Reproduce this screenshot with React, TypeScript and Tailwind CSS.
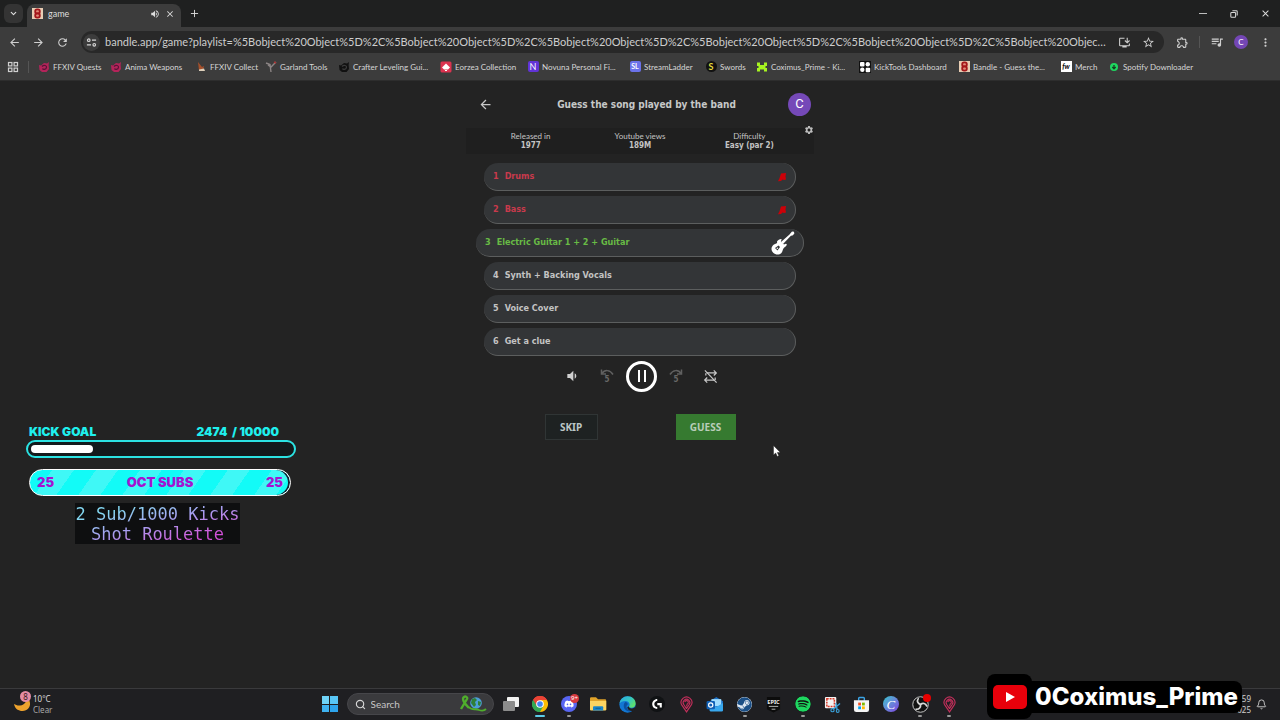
import type { ReactNode } from "react";
import {
  MdArrowBack,
  MdArrowForward,
  MdClose,
  MdInstallDesktop,
  MdMoreVert,
  MdOutlineExtension,
  MdQueueMusic,
  MdRefresh,
  MdSettings,
  MdStarBorder,
  MdVolumeDown,
  MdVolumeUp,
} from "react-icons/md";
import { FaDiscord, FaSpotify, FaSteam } from "react-icons/fa";
import { SiLogitechg } from "react-icons/si";
import { Bell, ChevronDown, Plus, Search } from "lucide-react";

const url = "bandle.app/game?playlist=" + "%5Bobject%20Object%5D%2C".repeat(9);

/* ---------- small drawings ---------- */

function BandleIcon({ className }: { className: string }) {
  return (
    <svg viewBox="0 0 12 12" className={className}>
      <rect width="12" height="12" fill="#e8cdb4" />
      <rect x="3.500" y="1.500" width="5" height="4.500" rx="2" fill="#e08a78" stroke="#a3161a" strokeWidth="2" />
      <rect x="3.500" y="6" width="5" height="4.500" rx="2" fill="#e08a78" stroke="#a3161a" strokeWidth="2" />
    </svg>
  );
}

function TuneIcon() {
  return (
    <svg viewBox="0 0 12 12" className="size-[11px]" fill="none" stroke="#d6d6d6" strokeWidth="1.3">
      <path d="M6.5 3.5H11M1 8.5h4.5" />
      <circle cx="3" cy="3.5" r="1.4" />
      <circle cx="9" cy="8.5" r="1.4" />
    </svg>
  );
}

function GridIcon() {
  return (
    <svg viewBox="0 0 12 12" className="size-3" fill="none" stroke="#d0d0d0" strokeWidth="1.2">
      <rect x="1.5" y="1.5" width="3.4" height="3.4" />
      <rect x="7.1" y="1.5" width="3.4" height="3.4" />
      <rect x="1.5" y="7.1" width="3.4" height="3.4" />
      <rect x="7.1" y="7.1" width="3.4" height="3.4" />
    </svg>
  );
}

function SwirlIcon({ color, dark }: { color: string; dark: string }) {
  return (
    <svg viewBox="0 0 12 12" className="size-3">
      <path d="M1 4l2 .6L6 2l3 .5L11 1l-.4 3 .4 4-2.500 3H4L1.500 9z" fill={color} />
      <path d="M4 5.500c2-2 5-1 4.500 1S5 9 4.500 7.500" fill="none" stroke={dark} strokeWidth="1.2" />
    </svg>
  );
}

function ChromeIcon() {
  return (
    <svg viewBox="0 0 48 48" className="size-4">
      <path d="M24 24L3.200 12A24 24 0 0 1 44.800 12z" fill="#ea4335" />
      <path d="M24 24L44.800 12A24 24 0 0 1 24 48z" fill="#fbbc05" />
      <path d="M24 24L24 48A24 24 0 0 1 3.200 12z" fill="#34a853" />
      <path d="M24 12h20.800L34 30z" fill="#fbbc05" />
      <path d="M24 12h20.800A24 24 0 0 0 3.200 12L14 30z" fill="#ea4335" />
      <path d="M34 30L24 48A24 24 0 0 1 3.200 12L14 30z" fill="#34a853" />
      <circle cx="24" cy="24" r="11.500" fill="#fff" />
      <circle cx="24" cy="24" r="8.500" fill="#4285f4" />
    </svg>
  );
}

function FolderIcon() {
  return (
    <svg viewBox="0 0 18 16" className="h-4 w-[18px]">
      <path d="M1 2.500A1.200 1.200 0 0 1 2.200 1.300H7l2 2h7a1.200 1.200 0 0 1 1.200 1.200V14H1z" fill="#e0a32a" />
      <path d="M1 5h16.200v8.500a1 1 0 0 1-1 1H2a1 1 0 0 1-1-1z" fill="#fcd462" />
      <path d="M4 14.500v-3.300a1 1 0 0 1 1-1h8.200a1 1 0 0 1 1 1v3.300z" fill="#1b86c9" />
      <path d="M6.500 12.300h5.200" stroke="#0d5f97" strokeWidth="1" />
    </svg>
  );
}

function EdgeIcon() {
  return (
    <svg viewBox="0 0 24 24" className="size-[17px]">
      <defs>
        <linearGradient id="edgeTop" x1="0" y1="0" x2="1" y2=".6">
          <stop offset="0" stopColor="#2aa7e0" />
          <stop offset=".6" stopColor="#35c6c0" />
          <stop offset="1" stopColor="#5fe06a" />
        </linearGradient>
      </defs>
      <circle cx="12" cy="12" r="11.500" fill="#1277d3" />
      <path d="M.6 11C1.500 4.500 6.500.5 12 .5c7 0 11.500 5 11.500 10 0 4-3 6-6 6-2.500 0-3.800-1-3.300-2 .8-1 .8-1.500.8-2.500 0-2.500-2.600-5-6-5C5 7 1.500 8.500.6 11z" fill="url(#edgeTop)" />
      <path d="M9 8.500c-3 2-3 8 0 11s7 3 10 1c-3 1-7-.5-8-3.500-1-2.500-.2-4.500 1.500-5.500-.5-2-2-3-3.500-3z" fill="#0b4f9e" />
      <path d="M14.200 14.500c-.8 1.500 1 3 4 3 2 0 3.500-.8 4.300-1.800l.7 2-3 3.300c-4 .8-8.500-1-8.500-5z" fill="#1f1f22" />
    </svg>
  );
}

function MapPinIcon() {
  return (
    <svg viewBox="0 0 14 18" className="h-[17px] w-[13px]" fill="none" stroke="#c22f5b" strokeWidth="1.2">
      <path d="M7 17L2.200 10A5.800 5.800 0 1 1 11.800 10z" />
      <path d="M7 13.500L4 9a3.600 3.600 0 1 1 6 0L7 13.500M5.200 6.500a1.900 1.900 0 1 1 2.600 2L7 11" />
    </svg>
  );
}

function OutlookIcon() {
  return (
    <svg viewBox="0 0 20 18" className="h-4 w-[18px]">
      <path d="M4 6l7.500-5L19 6v10.500H4z" fill="#1a6fc4" />
      <path d="M6 3.500h11v8H6z" fill="#9fdcff" />
      <path d="M4 8l7.500 4.500L19 8v8a1.500 1.500 0 0 1-1.500 1.500H5.500A1.500 1.500 0 0 1 4 16z" fill="#38a8ee" />
      <rect x="0.500" y="5.500" width="9.500" height="9.500" rx="1.500" fill="#0f5fb5" />
      <circle cx="5.200" cy="10.200" r="2.400" fill="none" stroke="#fff" strokeWidth="1.300" />
    </svg>
  );
}

function SnipIcon() {
  return (
    <svg viewBox="0 0 18 18" className="size-[17px]">
      <rect x="1" y="1" width="12" height="12" rx="1" fill="#f3f3f3" />
      <rect x="3" y="3" width="8" height="8" fill="none" stroke="#d83b2b" strokeWidth="1.600" strokeDasharray="2 1" />
      <path d="M17 8l-7.500 6M12.500 7.500L14 15" stroke="#3aa0d8" strokeWidth="1.500" />
      <circle cx="9" cy="15" r="1.700" fill="none" stroke="#3aa0d8" strokeWidth="1.200" />
      <circle cx="14.500" cy="15.800" r="1.500" fill="none" stroke="#3aa0d8" strokeWidth="1.200" />
    </svg>
  );
}

function StoreIcon() {
  return (
    <svg viewBox="0 0 18 18" className="size-[17px]">
      <path d="M6 5V2.500A1 1 0 0 1 7 1.500h4a1 1 0 0 1 1 1V5" fill="none" stroke="#3ba4e6" strokeWidth="1.500" />
      <path d="M1 4.500h16v10a2.500 2.500 0 0 1-2.500 2.500h-11A2.500 2.500 0 0 1 1 14.500z" fill="#f5f5f5" />
      <path d="M5.500 7h3v3h-3z" fill="#f25022" />
      <path d="M9.500 7h3v3h-3z" fill="#7fba00" />
      <path d="M5.500 11h3v3h-3z" fill="#00a4ef" />
      <path d="M9.500 11h3v3h-3z" fill="#ffb900" />
    </svg>
  );
}

function ObsIcon() {
  return (
    <svg viewBox="0 0 18 18" className="size-[17px]">
      <circle cx="9" cy="9" r="8.200" fill="#111" stroke="#cfcfcf" strokeWidth="1" />
      <g fill="none" stroke="#d8d8d8" strokeWidth="1.800" strokeLinecap="round">
        <path d="M9 9c-3-1-4-3.500-2.500-6" />
        <path d="M9 9c2.500-2 5.500-1.200 6.500 1.500" />
        <path d="M9 9c.5 3-1.500 5.300-4.500 5" />
      </g>
    </svg>
  );
}

function WeatherIcon() {
  return (
    <svg viewBox="0 0 18 18" className="size-[18px]">
      <path d="M13 1c1.500 5-1 9-6 9.500-2.500.2-4.500-.6-6-1.500 1 5 4.500 7 8.500 7 5 0 8-4 7.500-8C16.500 4.500 15 2 13 1z" fill="#eda22d" />
    </svg>
  );
}

function RibbonGlobe() {
  return (
    <svg viewBox="0 0 28 18" className="h-[18px] w-7">
      <path d="M2 14L8 4c1-2-2-3.500-3.500-1.500S6 9 10 13" fill="none" stroke="#4fae2c" strokeWidth="2.400" />
      <circle cx="17" cy="8" r="5.800" fill="#4d9fd6" />
      <path d="M13 4l3-1 2 2-2 2 1 3-2 2-3-4zM19 6l3 1-1 4-2-1z" fill="#2f7f35" />
      <path d="M10 12c3 4 7 1 10 3 3 1 5 1 7-1" fill="none" stroke="#4fae2c" strokeWidth="1.800" />
    </svg>
  );
}

function GuitarIcon() {
  return (
    <svg viewBox="0 0 26 26" className="h-[26px] w-[26px]" fill="#fff">
      <path d="M21.500 3.200L23 1.500l2 .2.300 2-1.800 1.800-1.600.2L14 14l-2-2 8.500-7.500z" />
      <path d="M8 11.500c1-1.500 3-2.700 4.200-2.500.8.300.3 1.200-.4 2.200l3.200 3.200c1.500-.7 2.700-.8 2.800.1 0 1.500-2 2.500-3.200 3.700-1.200 1.400-.8 3.300-2.400 5-1.900 1.900-5.800 1.800-8-.4s-2.300-5.500-.4-7.400c1.500-1.500 3.200-1.300 4.300-2.300z" />
      <path d="M6 18l3.500-2.500 1.500 1.500-2.500 3.500z" fill="#333537" />
      <circle cx="8.300" cy="18.300" r=".8" />
    </svg>
  );
}

function SkipArrow({ flip }: { flip?: boolean }) {
  return (
    <svg viewBox="0 0 16 16" className="size-4" fill="none" stroke="#606060" strokeWidth="1.500">
      <g transform={flip ? "matrix(-1 0 0 1 16 0)" : undefined}>
        <path d="M3 5.500c2.500-4 8-4 11 1" />
        <path d="M2.500 1.500v4.500h4.500" />
      </g>
      <text x="8" y="14" textAnchor="middle" fontSize="8" fontWeight="700" fill="#686868" stroke="none">
        5
      </text>
    </svg>
  );
}

function LoopOffIcon() {
  return (
    <svg viewBox="0 0 16 16" className="size-[15px]" fill="none" stroke="#c9c9c9" strokeWidth="1.300">
      <path d="M4 4.200h10M11.500 1.500l2.700 2.700-2.700 2.700M12 11.800H2M4.500 9.100l-2.700 2.700 2.700 2.700M13 9v2.800M3 7V4.500" />
      <path d="M2 1.500l12.500 13" />
    </svg>
  );
}

/* ---------- browser chrome ---------- */

function IconButton({ label, children }: { label: string; children: ReactNode }) {
  return (
    <button type="button" aria-label={label} className="flex size-6 shrink-0 items-center justify-center">
      {children}
    </button>
  );
}

function TabStrip() {
  return (
    <div className="flex h-[27px] items-center bg-[#1f2020] text-[#dedede]">
      <button type="button" aria-label="Search tabs" className="ml-1 flex size-[19px] items-center justify-center rounded-md bg-[#343434]">
        <ChevronDown className="size-[9px]" strokeWidth={3} />
      </button>
      <div className="ml-1 flex h-[23px] w-[154px] items-center self-end rounded-t-lg bg-[#3c3c3c] px-[5px] pb-1">
        <BandleIcon className="size-[11px]" />
        <span className="ml-[5px] flex-1 text-[9px]">game</span>
        <MdVolumeUp className="mr-1 size-[10px]" />
        <button type="button" aria-label="Close tab" className="flex size-3 items-center justify-center">
          <MdClose className="size-[10px]" />
        </button>
      </div>
      <button type="button" aria-label="New tab" className="ml-2 flex size-[11px] items-center justify-center">
        <Plus className="size-[11px]" />
      </button>
      <div className="ml-auto flex gap-[7px] pr-[3px]">
        <IconButton label="Minimize">
          <span className="h-px w-2 bg-[#bdbdbd]" />
        </IconButton>
        <IconButton label="Restore">
          <svg viewBox="0 0 10 10" className="size-2" fill="none" stroke="#d8d8d8" strokeWidth="1.300">
            <rect x="1" y="3" width="6" height="6" rx="1" />
            <path d="M3 1h5a1 1 0 0 1 1 1v5" />
          </svg>
        </IconButton>
        <IconButton label="Close">
          <MdClose className="size-[11px]" />
        </IconButton>
      </div>
    </div>
  );
}

function Toolbar() {
  return (
    <div className="flex h-[30px] items-center bg-[#3c3c3c] pr-[3px] pl-[2px] text-[#cfcfcf]">
      <IconButton label="Back">
        <MdArrowBack className="size-[13px]" />
      </IconButton>
      <IconButton label="Forward">
        <MdArrowForward className="size-[13px]" />
      </IconButton>
      <IconButton label="Reload">
        <MdRefresh className="size-[13px]" />
      </IconButton>
      <div className="ml-[7px] flex h-[22px] min-w-0 flex-1 items-center rounded-full bg-[#282828] pr-1 pl-[2px]">
        <span className="flex size-[17px] shrink-0 items-center justify-center rounded-full bg-[#3c3c3c]">
          <TuneIcon />
        </span>
        <input
          aria-label="Address"
          readOnly
          value={url}
          className="ml-[5px] min-w-0 flex-1 bg-transparent text-[11px] text-ellipsis text-[#cdcdcd] outline-none"
        />
        <span className="ml-[6px] flex">
          <IconButton label="Install app">
            <MdInstallDesktop className="size-[13px]" />
          </IconButton>
          <IconButton label="Bookmark this page">
            <MdStarBorder className="size-[13px]" />
          </IconButton>
        </span>
      </div>
      <div className="flex items-center pl-[6px]">
        <IconButton label="Extensions">
          <MdOutlineExtension className="size-[13px]" />
        </IconButton>
        <span className="mr-[5px] ml-[5px] h-3 w-px bg-[#555]" />
        <IconButton label="Media controls">
          <MdQueueMusic className="size-[14px]" />
        </IconButton>
        <button type="button" aria-label="Profile" className="ml-[5px] flex size-[14px] items-center justify-center rounded-full bg-[#7446b5] text-[8px] text-white">
          C
        </button>
        <span className="ml-[5px]">
          <IconButton label="Menu">
            <MdMoreVert className="size-[13px]" />
          </IconButton>
        </span>
      </div>
    </div>
  );
}

const bookmarks: { label: string; width: string; icon: ReactNode }[] = [
  { label: "FFXIV Quests", width: "w-[72px]", icon: <SwirlIcon color="#b3245a" dark="#5b1337" /> },
  { label: "Anima Weapons", width: "w-[85px]", icon: <SwirlIcon color="#b3245a" dark="#5b1337" /> },
  {
    label: "FFXIV Collect",
    width: "w-[70px]",
    icon: (
      <svg viewBox="0 0 12 12" className="size-3">
        <path d="M3 1l4 5 2-1-1 4-4 .500z" fill="#a5502b" />
        <path d="M4 8.500l5-1 1 2.500H4z" fill="#ddd0bb" />
      </svg>
    ),
  },
  {
    label: "Garland Tools",
    width: "w-[73px]",
    icon: (
      <svg viewBox="0 0 12 12" className="size-3" fill="none" stroke="#8c8585" strokeWidth="1.400">
        <path d="M1 2l4 1.500L6 11M11 1L7 5M3 4l3 2 3-3" />
        <path d="M9 1l2 1" stroke="#a33" />
      </svg>
    ),
  },
  { label: "Crafter Leveling Gui...", width: "w-[102px]", icon: <SwirlIcon color="#111" dark="#3a3a3a" /> },
  {
    label: "Eorzea Collection",
    width: "w-[87px]",
    icon: (
      <svg viewBox="0 0 12 12" className="size-3">
        <rect x=".5" y=".5" width="11" height="11" rx="1.500" fill="#dc3350" />
        <path d="M6 2.500L10 6.500 8 8.500H4L2 6.500zM5 9h2v1H5z" fill="#fff" />
      </svg>
    ),
  },
  {
    label: "Novuna Personal Fi...",
    width: "w-[102px]",
    icon: <span className="flex size-[11px] items-center justify-center rounded-[2px] bg-[#6133d6] text-[9px] text-white">N</span>,
  },
  {
    label: "StreamLadder",
    width: "w-[76px]",
    icon: <span className="flex size-[11px] items-center justify-center rounded-[2px] bg-[#6b72ea] text-[7px] font-bold text-white">SL</span>,
  },
  {
    label: "Swords",
    width: "w-[51px]",
    icon: <span className="flex size-[11px] items-center justify-center rounded-full bg-[#111] text-[9px] font-bold text-[#e6dc3c]">S</span>,
  },
  {
    label: "Coximus_Prime - Ki...",
    width: "w-[103px]",
    icon: (
      <svg viewBox="0 0 12 12" className="size-3" fill="#a6f320">
        <path d="M1 1.500h3V4h4V1.500h3V5H9.500v2H11v3.500H8V8.500H4v2H1V7h1.500V5H1z" />
      </svg>
    ),
  },
  {
    label: "KickTools Dashboard",
    width: "w-[99px]",
    icon: (
      <svg viewBox="0 0 12 12" className="size-3">
        <rect width="12" height="12" fill="#111" />
        <g fill="#fff">
          <rect x="1" y="1" width="4.500" height="4.500" rx="1" />
          <circle cx="8.800" cy="3.300" r="2.200" />
          <circle cx="3.300" cy="8.800" r="2.200" />
          <rect x="6.700" y="6.700" width="4.500" height="4.500" rx="1" />
        </g>
      </svg>
    ),
  },
  { label: "Bandle - Guess the...", width: "w-[102px]", icon: <BandleIcon className="size-[11px]" /> },
  {
    label: "Merch",
    width: "w-[48px]",
    icon: <span className="flex size-[11px] items-center justify-center bg-white text-[7px] font-bold text-black italic">fw</span>,
  },
  {
    label: "Spotify Downloader",
    width: "w-[92px]",
    icon: (
      <svg viewBox="0 0 12 12" className="size-3">
        <circle cx="6" cy="6" r="4" fill="#1ed760" />
        <path d="M6 4v3.500M4.300 6L6 7.800 7.700 6" stroke="#173d22" strokeWidth="1.300" fill="none" />
      </svg>
    ),
  },
];

function BookmarksBar() {
  return (
    <nav aria-label="Bookmarks" className="flex h-6 items-center overflow-hidden border-b border-[#2d2d2d] bg-[#3c3c3c] pb-1 pl-[7px]">
      <GridIcon />
      <span className="mr-[9px] ml-[9px] h-3 w-px shrink-0 bg-[#555]" />
      {bookmarks.map((b) => (
        <a key={b.label} href="#" className={`flex shrink-0 items-center gap-[3px] text-[8px] whitespace-nowrap text-[#d6d6d6] ${b.width}`}>
          <span className="flex w-3 shrink-0 justify-center">{b.icon}</span>
          {b.label}
        </a>
      ))}
    </nav>
  );
}

/* ---------- game ---------- */

const stats = [
  { label: "Released in", value: "1977" },
  { label: "Youtube views", value: "189M" },
  { label: "Difficulty", value: "Easy (par 2)" },
];

const tracks = [
  { name: "Drums", state: "missed" },
  { name: "Bass", state: "missed" },
  { name: "Electric Guitar 1 + 2 + Guitar", state: "current" },
  { name: "Synth + Backing Vocals", state: "locked" },
  { name: "Voice Cover", state: "locked" },
  { name: "Get a clue", state: "locked" },
];

const trackStyles: Record<string, string> = {
  missed: "mx-2 text-[#c93a4c]",
  current: "text-[#68bb45]",
  locked: "mx-2 text-[#c3c3c3]",
};

function Game() {
  return (
    <section className="relative mx-auto w-[348px] pt-[11px] font-['DejaVu_Sans_Condensed','DejaVu_Sans',sans-serif]">
      <header className="flex h-6 items-center pr-[3px] pl-3">
        <button type="button" aria-label="Back" className="text-[#c8c8c8]">
          <MdArrowBack className="size-[15px]" />
        </button>
        <h1 className="flex-1 pl-3 text-center text-[10px] font-bold text-[#c6c8c8]">
          Guess the song played by the band
        </h1>
        <button type="button" aria-label="Account" className="flex size-[23px] items-center justify-center rounded-full bg-[#7549b8] font-['Roboto',sans-serif] text-[13px] text-white">
          C
        </button>
      </header>

      <div className="relative mt-3 bg-[#1f1f1f] px-[10px] pt-1 pb-1">
        <dl className="grid grid-cols-3 text-center text-[8px] leading-[9px] text-[#c4c4c4]">
          {stats.map((s) => (
            <div key={s.label}>
              <dt className="font-['Lato',sans-serif]">{s.label}</dt>
              <dd className="font-bold">{s.value}</dd>
            </div>
          ))}
        </dl>
        <button type="button" aria-label="Settings" className="absolute -top-[3px] right-0 text-[#bdbdbd]">
          <MdSettings className="size-[10px]" />
        </button>
      </div>

      <ol className="mx-[10px] mt-[9px] flex flex-col gap-[5px]">
        {tracks.map((t, i) => (
          <li
            key={t.name}
            className={`flex h-7 items-center rounded-full border-r border-b border-[#5c5e5e] bg-[#333537] pt-px pr-2 pl-[9px] text-[9px] font-bold ${trackStyles[t.state]}`}
          >
            <span>{i + 1}</span>
            <span className="ml-[6px] flex-1">{t.name}</span>
            {t.state === "missed" && (
              <svg viewBox="0 0 10 10" className="size-[10px]" fill="#cc0008">
                <path d="M4 1.500l5-.5-.5 3.500.5 3-2 .5-1.500-.5-1.500 1.500-3 .2 1.500-3z" />
              </svg>
            )}
            {t.state === "current" && <GuitarIcon />}
          </li>
        ))}
      </ol>

      <div className="mt-1 flex h-8 items-center justify-center">
        <div className="flex items-center gap-[19px] pl-[2px] text-[#d0d0d0]">
          <button type="button" aria-label="Volume">
            <MdVolumeDown className="size-4" />
          </button>
          <button type="button" aria-label="Back 5 seconds">
            <SkipArrow />
          </button>
          <button type="button" aria-label="Pause" className="-mx-2 flex size-[31px] items-center justify-center gap-1 rounded-full border-[3px] border-white">
            <span className="h-3 w-[2px] bg-white" />
            <span className="h-3 w-[2px] bg-white" />
          </button>
          <button type="button" aria-label="Forward 5 seconds">
            <SkipArrow flip />
          </button>
          <button type="button" aria-label="Loop">
            <LoopOffIcon />
          </button>
        </div>
      </div>

      <div className="mt-[22px] flex justify-center gap-[78px] font-['Noto_Sans',sans-serif] text-[10px] font-bold">
        <button type="button" className="h-[26px] w-[53px] border border-[#303535] bg-[#1e2222] text-[#bcc6c6]">
          SKIP
        </button>
        <button type="button" className="h-[26px] w-[60px] bg-[#367a30] text-[#b9cdb9]">
          GUESS
        </button>
      </div>

      {/* mouse pointer */}
      <svg viewBox="0 0 8 12" className="absolute top-[364px] left-[307px] h-3 w-2">
        <path d="M.5.500v9.500l2.200-2 1.600 3.500 1.500-.7L4.300 7.500h3z" fill="#fff" stroke="#111" strokeWidth=".4" />
      </svg>
    </section>
  );
}

/* ---------- stream widgets ---------- */

function StreamWidgets() {
  return (
    <aside className="absolute top-[343px] left-[26px] w-[270px] font-['Inter',sans-serif] text-[12px] font-black">
      <div className="flex justify-between pr-[17px] pl-[3px] leading-[15px] text-[#1ff0ee]">
        <span>KICK GOAL</span>
        <span className="whitespace-pre">2474  / 10000</span>
      </div>
      <div role="progressbar" aria-label="Kick goal" aria-valuenow={2474} aria-valuemax={10000} className="mt-px h-[18px] rounded-full border-2 border-[#2be3e3] bg-[#131a1c] py-[3px] pr-3 pl-[3px]">
        <div className="h-2 rounded-full bg-white" style={{ width: `${(2474 / 10000) * 100}%` }} />
      </div>
      <div className="mx-[3px] mt-[11px] flex h-[27px] w-[262px] items-center justify-between rounded-full border border-white bg-[repeating-linear-gradient(125deg,#12fbf7_0_18px,#3ff8f6_18px_36px)] px-[7px] text-[13px] text-[#a314d0] shadow-[inset_-2px_0_0_#123]">
        <span>25</span>
        <span>OCT SUBS</span>
        <span>25</span>
      </div>
      <p className="mt-[7px] ml-[49px] w-[165px] bg-[#0e0f10] pt-px text-center font-['DejaVu_Sans_Mono',monospace] text-[17px] leading-5 font-normal whitespace-nowrap">
        <span className="block bg-linear-to-br from-[#84d8f2] from-20% via-[#a99bf0] to-[#d24fd8] to-80% bg-clip-text text-transparent">
          2 Sub/1000 Kicks
          <br />
          Shot Roulette
        </span>
      </p>
    </aside>
  );
}

/* ---------- taskbar ---------- */

const apps: { name: string; running?: string; icon: ReactNode }[] = [
  {
    name: "Task view",
    icon: (
      <svg viewBox="0 0 18 16" className="h-4 w-[18px]">
        <rect x="5" y="1" width="12" height="10" rx="1" fill="#f2f2f2" />
        <rect x="1" y="5" width="12" height="10" rx="1" fill="#8c8c8c" />
      </svg>
    ),
  },
  { name: "Chrome", running: "w-[10px] bg-[#5ccbe8]", icon: <ChromeIcon /> },
  {
    name: "Discord",
    running: "w-1 bg-[#999]",
    icon: (
      <span className="flex size-4 items-center justify-center rounded-full bg-[#5865f2] text-white">
        <FaDiscord className="size-[10px]" />
        <span className="absolute -top-[2px] -right-[2px] flex size-[9px] items-center justify-center rounded-full bg-[#d8393f] text-[6px] text-white">9+</span>
      </span>
    ),
  },
  { name: "File Explorer", icon: <FolderIcon /> },
  { name: "Edge", icon: <EdgeIcon /> },
  {
    name: "Logitech G Hub",
    icon: (
      <span className="flex size-4 items-center justify-center rounded-full bg-[#101214] text-white">
        <SiLogitechg className="size-[10px]" />
      </span>
    ),
  },
  { name: "Map", icon: <MapPinIcon /> },
  { name: "Outlook", icon: <OutlookIcon /> },
  { name: "Steam", running: "w-1 bg-[#999]", icon: <FaSteam className="size-[15px] rounded-full bg-[#dfe8f2] text-[#1b4f86]" /> },
  {
    name: "Epic Games",
    icon: (
      <svg viewBox="0 0 16 18" className="h-[17px] w-[15px]">
        <path d="M1 1h14v13l-7 3.500L1 14z" fill="#0c0c0c" />
        <text x="8" y="8.500" textAnchor="middle" fontSize="6" fontWeight="700" fill="#eee">EPIC</text>
        <path d="M3 11h10M6 14h4" stroke="#bbb" strokeWidth="1" />
      </svg>
    ),
  },
  { name: "Spotify", running: "w-1 bg-[#999]", icon: <FaSpotify className="size-4 rounded-full bg-[#111] text-[#1ed760]" /> },
  { name: "Snipping Tool", icon: <SnipIcon /> },
  { name: "Microsoft Store", icon: <StoreIcon /> },
  {
    name: "Canva",
    icon: (
      <span className="flex size-4 items-center justify-center rounded-full bg-linear-to-br from-[#16c4cc] to-[#7a35e0] font-['Liberation_Serif',serif] text-[13px] leading-none text-white italic">
        C
      </span>
    ),
  },
  {
    name: "OBS Studio",
    running: "w-1 bg-[#999]",
    icon: (
      <span className="flex">
        <ObsIcon />
        <span className="absolute -top-[2px] -right-[2px] size-2 rounded-full bg-[#e80000]" />
      </span>
    ),
  },
  { name: "Map session", running: "w-1 bg-[#999]", icon: <MapPinIcon /> },
];

function Taskbar() {
  return (
    <footer className="relative grid h-8 grid-cols-[1fr_auto_1fr] items-center border-t border-[#3a3a3c] bg-[#1f1f22] pb-px font-['Noto_Sans',sans-serif]">
      <button type="button" className="flex items-center gap-[2px] pl-[13px] text-left text-[8px] leading-[11px] text-[#dcdcdc]">
        <span className="relative">
          <WeatherIcon />
          <span className="absolute -top-1 right-0 flex size-[11px] items-center justify-center rounded-full bg-[#e58ba3] text-[8px] text-[#3a1a22]">8</span>
        </span>
        <span>
          10°C
          <br />
          <span className="text-[#a8a8a8]">Clear</span>
        </span>
      </button>

      <div className="flex items-center">
        <button type="button" aria-label="Start" className="grid size-4 grid-cols-2 gap-px">
          <span className="bg-[#6fd3f8]" />
          <span className="bg-[#58c6f6]" />
          <span className="bg-[#3fb2f0]" />
          <span className="bg-[#2ea4ec]" />
        </button>
        <label className="ml-[9px] flex h-[22px] w-[147px] items-center rounded-full border border-[#46464a] bg-[#3a3a3d] pr-[6px] pl-[7px]">
          <Search className="size-[11px] text-[#d6d6d6]" strokeWidth={2.5} />
          <input type="search" placeholder="Search" aria-label="Search" className="ml-[5px] w-0 min-w-0 flex-1 bg-transparent font-['Lato',sans-serif] text-[10px] placeholder-[#c6c6c6] outline-none" />
          <RibbonGlobe />
        </label>
        <div className="ml-2 flex w-[457px] items-center justify-between">
          {apps.map((a) => (
            <button
              key={a.name}
              type="button"
              aria-label={a.name}
              className="relative flex h-[22px] w-[18px] items-center justify-center"
            >
              <span className="relative flex">{a.icon}</span>
              {a.running && <span className={`absolute -bottom-[2px] left-1/2 h-[2px] -translate-x-1/2 rounded-full ${a.running}`} />}
            </button>
          ))}
        </div>
      </div>

      <div className="flex items-center justify-end gap-[5px] pr-[13px] text-right text-[8px] leading-[11px] text-[#d0d0d0]">
        <span>
          59
          <br />
          025
        </span>
        <Bell className="size-[11px]" />
      </div>

      {/* channel plate lies over the tray */}
      <div className="absolute right-[38px] bottom-px flex items-center font-['Inter',sans-serif]">
        <span className="flex h-[45px] w-[45px] items-center justify-center rounded-lg bg-black">
          <svg viewBox="0 0 34 24" className="h-6 w-[34px]">
            <rect width="34" height="24" rx="5" fill="#e8000b" />
            <path d="M13 7l9 5-9 5z" fill="#fff" />
          </svg>
        </span>
        <span className="-ml-1 flex h-8 items-center rounded-r-lg bg-black pr-1 pl-[7px] text-[24px] font-extrabold text-white">
          0Coximus_Prime
        </span>
      </div>
    </footer>
  );
}

export default function App() {
  return (
    <div className="flex min-h-screen flex-col bg-[#232323] font-['Noto_Sans',sans-serif]">
      <div className="font-['Lato',sans-serif]">
        <TabStrip />
        <Toolbar />
        <BookmarksBar />
      </div>
      <main className="relative flex-1">
        <Game />
        <StreamWidgets />
      </main>
      <Taskbar />
    </div>
  );
}
